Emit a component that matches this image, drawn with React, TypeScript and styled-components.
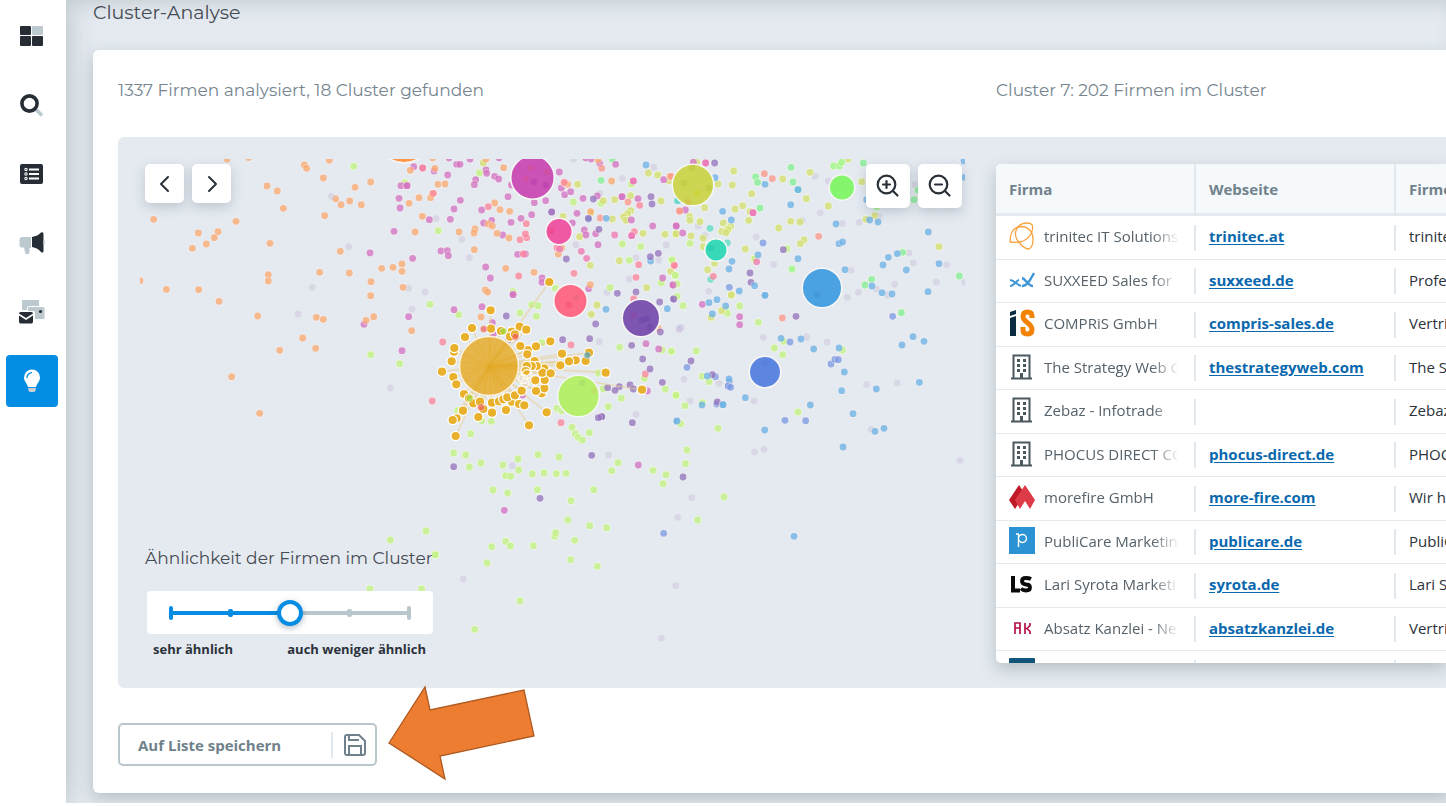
import React, { useState } from "react";
import styled, { createGlobalStyle, css } from "styled-components";

const GlobalStyle = createGlobalStyle`
  *, *::before, *::after { box-sizing: border-box; }
  body {
    margin: 0;
    background: #ffffff;
    color: #2b323a;
    font-family: "Open Sans", "Noto Sans", sans-serif;
    font-size: 15px;
    line-height: 20px;
  }
  button, input { font: inherit; }
`;

const headingFont = css`
  font-family: Montserrat, Inter, "Open Sans", sans-serif;
  font-weight: 400;
`;

const Page = styled.div`
  display: flex;
  overflow: hidden;
`;

const Sidebar = styled.nav`
  position: relative;
  z-index: 1;
  flex: none;
  display: flex;
  flex-direction: column;
  gap: 17px;
  width: 66px;
  padding: 10px 8px 10px 6px;
  background: #ffffff;
  box-shadow: 0 0 30px rgba(140, 158, 155, 0.5);
`;

const NavLink = styled.a<{ $active?: boolean }>`
  display: flex;
  align-items: center;
  justify-content: center;
  width: 52px;
  height: 52px;
  border-radius: 4px;
  background: ${(p) => (p.$active ? "#048de2" : "transparent")};
`;

const Main = styled.main`
  flex: 1;
  min-width: 0;
  padding: 0 0 10px 27px;
  background: #e5eaf1;
  box-shadow: inset 0 12px 20px -10px rgba(140, 158, 155, 0.4);
`;

const Title = styled.h1`
  ${headingFont}
  margin: 0;
  height: 50px;
  font-size: 19px;
  line-height: 25px;
  color: #454b52;
`;

const Card = styled.section`
  padding: 27px 0 27px 25px;
  background: #ffffff;
  border-radius: 6px 0 0 6px;
  box-shadow: 0 6px 16px rgba(95, 115, 115, 0.35);
`;

const Heads = styled.div`
  display: grid;
  grid-template-columns: 1fr 450px;
  height: 60px;
`;

const Subtitle = styled.h2`
  ${headingFont}
  margin: 0;
  font-size: 17px;
  line-height: 26px;
  color: #76858f;
`;

const Panel = styled.div`
  display: grid;
  grid-template-columns: 1fr 450px;
  gap: 31px;
  padding: 22px 0 25px 22px;
  background: #e5eaf1;
  border-radius: 6px 0 0 6px;
`;

const MapArea = styled.div`
  position: relative;
  height: 504px;
`;

const Graph = styled.svg`
  display: block;
  width: 100%;
  height: 500px;
`;

const Overlay = styled.div<{ $side: "left" | "right" }>`
  position: absolute;
  top: 5px;
  ${(p) => (p.$side === "left" ? "left: 5px;" : "right: 3px;")}
  display: flex;
  gap: 8px;
`;

const IconButton = styled.button<{ $size: number }>`
  display: flex;
  align-items: center;
  justify-content: center;
  width: ${(p) => p.$size}px;
  height: ${(p) => p.$size}px;
  padding: 0;
  border: 0;
  border-radius: 5px;
  background: #ffffff;
  color: #2a3138;
  box-shadow: 0 4px 12px rgba(70, 90, 100, 0.25);
`;

const Similarity = styled.div`
  position: absolute;
  left: 5px;
  bottom: 5px;
  width: 292px;
`;

const SimilarityLabel = styled.label`
  ${headingFont}
  display: block;
  font-size: 17px;
  line-height: 24px;
  margin-bottom: 21px;
  color: #454b52;
  white-space: nowrap;
`;

const SliderBox = styled.div`
  display: grid;
  align-items: center;
  justify-content: center;
  grid-template-columns: 242px;
  height: 43px;
  margin: 0 4px 0 2px;
  border-radius: 4px;
  background: #ffffff;
`;

const Ticks = styled.div`
  grid-area: 1 / 1;
  display: flex;
  align-items: center;
  justify-content: space-between;
  background: linear-gradient(90deg, #048de2 50%, #b9c6cc 50%) center / 100% 4px no-repeat;
`;

const Tick = styled.span<{ $end?: boolean; $on?: boolean }>`
  width: ${(p) => (p.$end ? 4 : 5)}px;
  height: ${(p) => (p.$end ? 14 : 8)}px;
  border-radius: 2px;
  background: ${(p) => (p.$on ? "#048de2" : "#b9c6cc")};
`;

const Range = styled.input`
  grid-area: 1 / 1;
  width: 100%;
  height: 26px;
  margin: 0;
  appearance: none;
  background: transparent;
  &::-webkit-slider-thumb {
    appearance: none;
    width: 26px;
    height: 26px;
    border: 4px solid #048de2;
    border-radius: 50%;
    background: #ffffff;
    box-shadow: 0 2px 6px rgba(40, 60, 80, 0.35);
  }
`;

const RangeEnds = styled.div`
  display: flex;
  justify-content: space-between;
  padding: 6px 11px 0 8px;
  font-size: 13px;
  font-weight: 700;
  line-height: 18px;
`;

const TableBox = styled.div`
  height: 499px;
  margin-top: 5px;
  overflow: hidden;
  border-radius: 5px 0 0 5px;
  background: #ffffff;
  box-shadow: 0 6px 16px rgba(95, 115, 115, 0.35);
`;

const Table = styled.table`
  width: 600px;
  table-layout: fixed;
  border-collapse: separate;
  border-spacing: 0;
`;

const HeadCell = styled.th`
  height: 52px;
  padding: 0 13px;
  border-bottom: 3px solid #e4eaef;
  background: linear-gradient(#e2e9ee, #e2e9ee) right / 2px 100% no-repeat #f5f9fc;
  color: #71828c;
  font-weight: 700;
  text-align: left;
`;

const Row = styled.tr`
  height: 43px;
  &:nth-child(odd) {
    height: 44px;
  }
`;

const Cell = styled.td`
  padding: 0 13px 3px;
  border-bottom: 1px solid #e4eaef;
  background: linear-gradient(#e2e9ee, #e2e9ee) right / 2px 26px no-repeat;
  white-space: nowrap;
`;

const Company = styled.div`
  display: flex;
  align-items: center;
  gap: 9px;
  svg { flex: none; }
`;

const CompanyName = styled.span`
  width: 133px;
  overflow: hidden;
  color: #56626b;
  mask-image: linear-gradient(90deg, #000 108px, transparent 136px);
`;

const SiteLink = styled.a`
  color: #0a68ae;
  font-weight: 700;
  text-decoration: underline;
  text-underline-offset: 2px;
`;

const Footer = styled.footer`
  position: relative;
  margin-top: 35px;
`;

const SaveButton = styled.button`
  display: flex;
  align-items: center;
  justify-content: space-between;
  width: 259px;
  height: 43px;
  padding: 0 8px 0 18px;
  border: 2px solid #b9c6cc;
  border-radius: 5px;
  background: #ffffff;
  color: #6f818b;
  font-weight: 700;
`;

const SaveIcon = styled.span`
  display: flex;
  align-items: center;
  height: 26px;
  padding-left: 10px;
  border-left: 2px solid #e2e9ee;
`;

const Arrow = styled.svg`
  position: absolute;
  left: 269px;
  top: -39px;
  pointer-events: none;
`;

const palette = {
  orange: "#fb9a53",
  magenta: "#cb54b6",
  purple: "#7d55b2",
  lilac: "#c9c0da",
  green: "#b5ef6c",
  olive: "#cdd553",
  pink: "#fd6b87",
  hot: "#ef5aa6",
  salmon: "#fd8370",
  blue: "#4aa3e3",
  indigo: "#5d86e1",
  teal: "#38d9b9",
  mint: "#66ea85",
  lime: "#86f56e",
};
type Colour = keyof typeof palette;

/* Nodes are kept per sector: x, y of the sector on the map, and node positions on a grid of thirds. */
interface Sector {
  x: number;
  y: number;
  nodes: Partial<Record<Colour, string>>;
}

const sectors: Sector[] = [
  {
    x: 118, y: 137,
    nodes: {
      magenta: "756,348 738,562",
      orange: "327,66 392,62 447,147 478,162 496,214 107,247 354,253 241,288 300,284 289,302 265,321 223,334 456,319 451,413 451,432 66,431 145,457 242,458 303,493 419,537 485,640 341,719 554,603 593,634 595,541 616,547 605,406 694,408 667,343 620,236 669,203 695,192 653,185 730,203 711,151 758,135 616,123 634,70 559,84 566,94 759,434 758,476 791,394 744,550 767,539",
      green: "707,88 758,653",
      lilac: "640,178 692,329 583,451 540,531 817,753",
    },
  },
  {
    x: 390, y: 150,
    nodes: {
      lilac: "138,206 216,268 238,323 56,415 105,426 551,27 697,85 792,52 629,130 829,285 738,323 718,387 651,427 558,284 806,330",
      green: "268,69 45,98 145,242 724,102 550,156 633,160 697,282 752,290 718,331 846,331 855,376 814,398 660,413 496,415 369,425",
      mint: "633,91 667,27",
      olive: "280,39 775,69 803,75 563,103 674,149 722,137 640,152 813,153 722,182 713,191 701,200 708,211 667,207 759,250 825,253 858,251 569,260 601,346 688,332 770,413 519,199 602,188 842,364 838,92",
      magenta: "71,50 98,54 132,63 173,75 200,43 210,43 240,27 288,60 290,70 257,89 253,104 314,79 326,87 33,107 51,107 51,107 27,145 30,174 118,209 181,208 192,177 211,151 12,244 275,180 281,219 305,211 354,140 363,217 393,205 425,194 433,158 467,152 508,66 514,114 524,134 542,125 579,145 561,190 547,219 583,240 588,255 617,251 624,284 622,138 696,140 696,140 744,146 724,210 788,228 725,257 629,40 677,43 730,93 821,89 818,384 849,405 153,303 172,302 175,317 68,325 287,351 301,384 383,313 406,312 338,255 456,384 456,397 369,433 485,186 603,27 587,24 327,24 177,24 364,105 596,416 858,228",
      orange: "61,61 135,55 144,103 165,102 128,130 122,143 87,143 57,160 97,199 75,246 207,246 255,237 252,249 314,159 330,179 359,184 295,222 307,228 321,250 357,264 253,299 347,355 432,367 9,352 36,342 36,364 39,412 286,420 293,426 341,53 288,27 522,98 533,103 665,93 624,29 601,404 505,312 840,79 128,24 515,294 602,185",
      pink: "98,54 390,269 410,263 406,252 409,221 295,170 386,378 552,370 746,344 738,382 853,346 733,245 749,166 130,130 400,312 501,293 523,97",
      hot: "574,304 590,325 674,255 509,297 725,257 730,93",
      salmon: "635,55 714,156 631,204 868,183",
      blue: "768,45 649,205 782,333 596,207 866,152",
      purple: "610,147 627,238 529,327 783,140 786,162 781,320 805,310 682,430 738,426 595,205 485,186",
    },
  },
  {
    x: 670, y: 150,
    nodes: {
      lilac: "435,79 475,93 451,189 397,211 259,261 311,343 543,361 517,221 568,217 627,199 717,309 730,339 830,344 799,396 674,403 619,417 565,427 532,442 116,424 85,228 104,257 735,104 655,165 652,435 884,397",
      olive: "191,63 144,102 187,105 245,131 338,87 420,67 409,146 475,168 534,27 575,95 104,173 195,177 218,167 59,199 60,211 90,215 236,211 240,185 160,219 182,229 155,244 174,238 174,238 168,248 63,258 18,252 99,265 100,290 226,297 326,234 362,214 390,216 402,270 391,281 588,208 614,197 807,290 184,435 113,359 134,340 254,327 80,37",
      green: "60,280 6,330 16,376 21,402 351,296 254,327",
      mint: "363,52 257,81 263,97 369,96 270,174 580,39 744,120 732,149 698,307 605,388 585,405 868,378",
      lime: "491,48 508,48 515,37 620,170 366,357",
      teal: "384,119 120,235 172,279 122,388 22,152",
      magenta: "107,39 46,180 19,228 38,249 249,188 9,405 70,37",
      hot: "260,335 249,188 107,39",
      pink: "13,346 130,379",
      salmon: "283,71 307,86 446,259 29,183 3,79",
      indigo: "279,279 178,412",
      purple: "340,299 240,369 243,397 134,39",
      blue: "285,103 362,164 158,184 184,210 498,222 599,210 624,216 775,246 384,326 384,119 525,359 507,281 518,276 264,315 186,334 177,357 254,407 208,423 285,436 639,345 655,322 682,311 709,360 807,341 606,408 636,428 666,432 774,425 882,33 884,82 590,149 135,83",
    },
  },
  {
    x: 390, y: 290,
    nodes: {
      lilac: "66,57 628,155 738,373 868,115",
      green: "120,43 206,74 390,69 425,44 444,47 439,79 456,158 29,221 275,392 304,394 242,431 501,355 515,362 546,412 556,431 565,442 577,450 598,428 655,350 694,325 640,296 625,249 689,172 763,265 826,297 845,184 858,315 816,180 203,362",
      olive: "621,45 604,73",
      magenta: "192,59 276,50 56,80 36,182 369,14 307,98 310,132 768,161 806,177 772,303 398,315",
      pink: "158,156 127,333 543,165 513,398 766,252 731,27",
      orange: "65,122 273,81 805,115 -391,370",
      purple: "349,78 518,149 617,102 599,146 809,36 811,126 725,166 758,207 780,237 817,277 720,285 730,297 688,290 653,293 675,301 635,380 635,380 625,383 727,398 851,27 355,150",
      blue: "648,58 832,56 860,394",
    },
  },
  {
    x: 670, y: 290,
    nodes: {
      lilac: "34,112 28,119 42,268 147,280 60,333 252,333 280,142 410,141 471,156 590,283 681,279 604,418 282,478 254,486 870,511",
      green: "21,19 39,47 209,48 167,58 172,70 265,97 341,154 313,174 338,194 517,180 79,183 4,184 97,259 117,275 18,316 45,347 97,338 32,401 144,415 384,366",
      olive: "184,15 155,62 123,82",
      mint: "694,68",
      salmon: "337,84",
      magenta: "97,43 209,80 209,104",
      indigo: "360,156 345,391 407,392 483,222 495,208 505,209 51,232 136,260 178,275 175,288 175,288 182,292 668,79 140,342",
      purple: "11,27 378,79 63,213 127,254 142,336",
      blue: "141,29 117,38 285,16 127,72 333,145 393,147 431,177 507,174 523,246 515,302 619,297 549,371 748,277 696,165 729,140 762,154 421,345 226,323 284,420 519,471 615,424 642,415 21,393 112,258 177,267 159,344 159,344 96,345 167,48",
    },
  },
  {
    x: 380, y: 440,
    nodes: {
      lilac: "397,77 686,45 935,173 893,232 250,417 887,437 844,595",
      green: "221,39 257,45 268,81 303,69 369,75 414,57 416,90 377,107 392,109 457,102 492,99 474,44 537,51 529,101 558,100 339,150 383,159 472,149 573,182 641,149 695,92 714,68 819,91 858,104 849,131 921,30 917,71 1032,171 953,240 563,240 629,257 680,263 524,289 527,278 584,301 460,317 377,304 391,318 335,320 321,369 572,359 652,379 420,483 284,568 138,273 31,300 166,344 166,344 125,447 -30,447",
      purple: "221,80 480,175 635,46 909,111",
      magenta: "373,211 775,75",
      indigo: "851,280",
      blue: "1242,289",
    },
  },
];

const clusterNodes =
  "302,61 246,114 225,141 192,185 193,174 185,214 156,245 190,261 199,283 222,312 237,325 250,340 280,357 270,335 306,338 306,368 327,334 340,328 365,335 352,322 348,360 387,342 375,316 403,346 395,302 200,385 219,362 188,390 197,438 265,381 417,406 470,367 455,310 463,295 438,303 436,271 464,270 463,235 457,248 482,250 434,213 440,228 425,228 410,228 407,243 414,180 412,193 391,168 438,169 481,154 389,110 409,119 365,125 360,140 375,133 333,123 303,116 516,191 511,226 557,211 537,214 587,213 597,188 647,248 756,299 478,-24";

/* Nodes of other clusters that lie over the highlighted one. */
const overNodes: { colour: string; points: string }[] = [
  { colour: "#9bdc3c", points: "340,124 239,325" },
  { colour: "#ee5a55", points: "281,117 376,140 273,352" },
  { colour: "#4aa3b3", points: "592,196" },
];

const hubs: { x: number; y: number; r: number; fill: string }[] = [
  { x: 404, y: 136, r: 26, fill: "#fd9647" },
  { x: 532.5, y: 177.5, r: 21, fill: "#cb52b6" },
  { x: 559, y: 231.5, r: 12.5, fill: "#ef58a5" },
  { x: 693, y: 185, r: 20, fill: "#ccd652" },
  { x: 842, y: 187.5, r: 12, fill: "#86f56e" },
  { x: 716, y: 250, r: 10.5, fill: "#38d9b9" },
  { x: 822, y: 288, r: 19, fill: "#4aa2e3" },
  { x: 570.5, y: 301, r: 16, fill: "#fd6b87" },
  { x: 641, y: 318, r: 18, fill: "#7e56b2" },
  { x: 765, y: 372, r: 15, fill: "#5d86e1" },
  { x: 578.5, y: 396, r: 20, fill: "#b5ef6c" },
];

/* Nodes that shimmer through the hubs. */
const hubShades: { x: number; y: number; fill: string }[] = [
  { x: 526, y: 179, fill: "#d64d98" },
  { x: 534, y: 182, fill: "#b93aa8" },
  { x: 531, y: 168, fill: "#d64d98" },
  { x: 547, y: 172, fill: "#d64d98" },
  { x: 546, y: 185, fill: "#b93aa8" },
  { x: 551, y: 231, fill: "#f0407f" },
  { x: 692, y: 168, fill: "#bcc63e" },
  { x: 684, y: 183, fill: "#bcc63e" },
  { x: 697, y: 193, fill: "#cbd12a" },
  { x: 709, y: 188, fill: "#bcc63e" },
  { x: 688, y: 202, fill: "#d7b548" },
  { x: 711, y: 248, fill: "#22c6ae" },
  { x: 817, y: 295, fill: "#3d8fd6" },
  { x: 569, y: 305, fill: "#f6506e" },
  { x: 576, y: 298, fill: "#e5667d" },
  { x: 634, y: 315, fill: "#8a44a0" },
  { x: 642, y: 320, fill: "#6a41a6" },
  { x: 647, y: 319, fill: "#6a41a6" },
  { x: 650, y: 327, fill: "#6a41a6" },
  { x: 582, y: 383, fill: "#a3d968" },
  { x: 594, y: 391, fill: "#c3dc60" },
  { x: 766, y: 363, fill: "#567ddb" },
];

const parse = (points: string, x: number, y: number) =>
  points.split(" ").map((pair) => {
    const [px, py] = pair.split(",").map(Number);
    return { cx: x + px / 3, cy: y + py / 3 };
  });

const cluster = parse(clusterNodes, 390, 290);

function ClusterMap() {
  return (
    <Graph viewBox="140 159 825 500" preserveAspectRatio="xMinYMin slice" aria-label="Cluster">
      {sectors.map((sector) =>
        Object.entries(sector.nodes).map(([colour, points]) => {
          const bright = colour === "green" || colour === "lime" || colour === "mint" || colour === "olive";
          return (
            <g key={`${sector.x}-${sector.y}-${colour}`} fill={palette[colour as Colour]}>
              {parse(points as string, sector.x, sector.y).map((p, i) => (
                <React.Fragment key={i}>
                  {colour !== "lilac" && (
                    <circle {...p} r={4.4} fill={bright ? "#f2fbdc" : "#fbf0f0"} fillOpacity={bright ? 0.6 : 0.4} />
                  )}
                  <circle {...p} r={3.4} fillOpacity={colour === "lilac" ? 0.45 : 0.62} />
                </React.Fragment>
              ))}
            </g>
          );
        })
      )}
      <g stroke="#e6cf98" strokeOpacity={0.6} strokeWidth={1.6}>
        {cluster.map((p, i) => (
          <line key={i} x1={489} y1={366} x2={p.cx} y2={p.cy} />
        ))}
      </g>
      {hubs.map((h) => (
        <circle key={`${h.x}-${h.y}`} cx={h.x} cy={h.y} r={h.r + 0.8} fill={h.fill} stroke="#f6f6f4" strokeWidth={1.6} />
      ))}
      {hubShades.map((s) => (
        <circle key={`${s.x}-${s.y}`} cx={s.x} cy={s.y} r={3.3} fill={s.fill} fillOpacity={0.5} />
      ))}
      {cluster.map((p, i) => (
        <circle key={i} {...p} r={4.7} fill="#e9b02c" stroke="#ffffff" strokeWidth={1.2} />
      ))}
      <g fill="none" stroke="#fff8ea" strokeWidth={1.4}>
        <circle cx={523} cy={379} r={4.5} />
        <circle cx={527} cy={374} r={4.5} />
        <circle cx={525} cy={383} r={4} />
      </g>
      <circle cx={489} cy={366} r={29.5} fill="#e7b64a" stroke="#fbf3e0" strokeWidth={1.4} />
      <g stroke="#e5ac2b" strokeOpacity={0.3} strokeWidth={1.6}>
        {cluster.map((p, i) => {
          const dx = p.cx - 489;
          const dy = p.cy - 366;
          const k = 28 / Math.hypot(dx, dy);
          return <line key={i} x1={489} y1={366} x2={489 + dx * k} y2={366 + dy * k} />;
        })}
      </g>
      {overNodes.map((group) => (
        <g key={group.colour} fill={group.colour} fillOpacity={0.7} stroke="#fff3e0" strokeOpacity={0.5}>
          {parse(group.points, 390, 290).map((p, i) => (
            <circle key={i} {...p} r={3.5} />
          ))}
        </g>
      ))}
    </Graph>
  );
}

const dark = "#262d34";
const pale = "#bccad0";

const navItems = [
  {
    label: "Dashboard",
    icon: (
      <svg width="24" height="22" viewBox="0 0 24 22">
        <rect x="0" y="1" width="11" height="9" rx="1" fill={dark} />
        <rect x="12" y="1" width="11" height="9" rx="1" fill={pale} />
        <rect x="0" y="11" width="11" height="10" rx="1" fill={dark} />
        <rect x="12" y="11" width="11" height="10" rx="1" fill={dark} />
      </svg>
    ),
  },
  {
    label: "Suche",
    icon: (
      <svg width="24" height="24" viewBox="0 0 24 24">
        <path d="M16.500 17l5.500 5.500" stroke={pale} strokeWidth="3.600" />
        <circle cx="9.500" cy="10.500" r="7.600" fill="none" stroke={dark} strokeWidth="3.600" />
      </svg>
    ),
  },
  {
    label: "Listen",
    icon: (
      <svg width="24" height="20" viewBox="0 0 24 20">
        <rect x="0" y="0" width="23" height="20" rx="2" fill={dark} />
        <path d="M9 5.500h10M9 10h10M9 14.500h10" stroke="#fff" strokeWidth="2" />
        <g fill="none" stroke="#fff" strokeWidth="1.100">
          <circle cx="6" cy="5.500" r="1.200" />
          <circle cx="6" cy="10" r="1.200" />
          <circle cx="6" cy="14.500" r="1.200" />
        </g>
      </svg>
    ),
  },
  {
    label: "Kampagnen",
    icon: (
      <svg width="26" height="22" viewBox="0 0 26 22">
        <path d="M12 5v11H10.500v4.500q0 1.500-1.500 1.500H7.500q-1.500 0-1.500-1.500L5 15.500H3q-2.500 0-2.500-2.500V8Q.5 5 3.500 5z" fill={pale} />
        <path d="M13 5q6-1 9-4.500 2.500-1 2.500 1.500V19q0 2.500-2.500 1-3-4-9-5z" fill={dark} />
        <path d="M25 8.500v4" stroke={pale} strokeWidth="1.500" />
      </svg>
    ),
  },
  {
    label: "Nachrichten",
    icon: (
      <svg width="26" height="24" viewBox="0 0 26 24">
        <path d="M4 0h15q1 0 1 1v5H10q-2 0-2 2v2H3V1q0-1 1-1z" fill={pale} />
        <path d="M10 7h14q1.500 0 1.500 1.500V18q0 1-1.500 1h-8v-6q0-2-2-2H9V8q0-1 1-1z" fill={pale} />
        <circle cx="21.500" cy="11.500" r="1.600" fill={dark} />
        <path d="M0 13.500q0-1.500 1.500-1.500h11q1.500 0 1.500 1.500L7 18z" fill={dark} />
        <path d="M0 15.500l7 4.500 7-4.500v6q0 2-1.500 2h-11Q0 23.500 0 21.500z" fill={dark} />
      </svg>
    ),
  },
  {
    label: "Insights",
    icon: (
      <svg width="18" height="24" viewBox="0 0 18 24">
        <path d="M9 .500a8 8 0 0 1 8 8c0 4-3 5.500-4 9.500H5C4 14 1 12.500 1 8.500a8 8 0 0 1 8-8z" fill="#fff" />
        <path d="M4 8.500q.5-4 4.500-4.800" fill="none" stroke="#048de2" strokeWidth="1.300" strokeLinecap="round" />
        <path d="M5 19h8l-.5 2.500q-.5 1.500-2 1.500h-3q-1.500 0-2-1.500z" fill="#c9cfd2" />
      </svg>
    ),
  },
];

const Building = () => (
  <svg width="26" height="26" viewBox="0 0 26 26" fill="none" stroke="#4b5860">
    <path d="M4.500 24V1.500h16V24M2 24.500h21" strokeWidth="2" />
    <path d="M9.500 5v15M15.500 5v15" strokeWidth="3" strokeDasharray="3 2" />
    <path d="M12.500 19v5" strokeWidth="3" />
  </svg>
);

const logos: Record<string, React.ReactNode> = {
  trinitec: (
    <svg width="26" height="28" viewBox="0 0 26 28" fill="none" stroke="#f9a13c" strokeWidth="1.300">
      <path d="M1 20C1 10 5 5 12 4.500c7 0 12 5 12 13 0 4-1 8-4 9.500-5 0-13-8-13.500-14" />
      <path d="M6.500 13C6 6 11 1 18 1c5 0 6 2 5.500 6C23 13 18 18 13 19.500c-4 1-8 1-12 .5" />
    </svg>
  ),
  suxxeed: (
    <svg width="26" height="26" viewBox="0 0 26 26" fill="none" stroke="#3f97d6">
      <path d="M1 13c4 0 6 4 11 6M10 13C8 13 5 19 1 19" strokeWidth="2" />
      <path d="M13 11c4 1 6 8 11 8M25 6c-3 5-6 13-12 13" strokeWidth="2.400" />
    </svg>
  ),
  compris: (
    <svg width="26" height="28" viewBox="0 0 26 28">
      <path d="M1 3l6-2v4L1 7zM1 9l6-2v20H1z" fill="#0b2d42" />
      <path d="M23 9V7q0-4-4.500-4T14 7.500C14 13 23 14 23 20.500q0 4.500-4.500 4.500T14 21v-3" fill="none" stroke="#f28306" strokeWidth="5" />
    </svg>
  ),
  building: <Building />,
  morefire: (
    <svg width="26" height="26" viewBox="0 0 26 26">
      <path d="M10 1l6 9-10 15L0 16z" fill="#c01a28" />
      <path d="M16 1l10 15-5 9-5-8-5 8-5-9z" fill="#de3b48" />
    </svg>
  ),
  publicare: (
    <svg width="26" height="27" viewBox="0 0 26 27">
      <rect width="26" height="27" fill="#2b93d3" />
      <path d="M9.500 20V7M9.500 11a4 4 0 1 1 4 4.500 4 4 0 0 1-4-4.500M7 7h3" fill="none" stroke="#fff" strokeWidth="1.400" />
    </svg>
  ),
  syrota: (
    <svg width="26" height="26" viewBox="0 0 26 26">
      <path d="M4 5v14.500h7" fill="none" stroke="#0a0a0a" strokeWidth="4" />
      <path d="M22 8q-2-1-5-1-4 0-4 3t4 3.500q4 0 4 3t-4 3q-3 0-5-2" fill="none" stroke="#0a0a0a" strokeWidth="3.800" />
    </svg>
  ),
  absatz: (
    <svg width="26" height="26" viewBox="0 0 26 26" fill="none" stroke="#b3124a" strokeWidth="1.700">
      <path d="M6 19V8h5v11M6 13h5M16 8v11M16 13.500h2l3-3V8M18 13.500l3 3V19" />
    </svg>
  ),
  teal: (
    <svg width="26" height="26" viewBox="0 0 26 26">
      <rect width="26" height="26" rx="1" fill="#11567a" />
    </svg>
  ),
};

const rows = [
  { logo: "trinitec", name: "trinitec IT Solutions", site: "trinitec.at", text: "trinitec IT" },
  { logo: "suxxeed", name: "SUXXEED Sales for", site: "suxxeed.de", text: "Professionell" },
  { logo: "compris", name: "COMPRiS GmbH", site: "compris-sales.de", text: "Vertrieb" },
  { logo: "building", name: "The Strategy Web GmbH", site: "thestrategyweb.com", text: "The Strategy" },
  { logo: "building", name: "Zebaz - Infotrade", site: "", text: "Zebaz" },
  { logo: "building", name: "PHOCUS DIRECT COM", site: "phocus-direct.de", text: "PHOCUS" },
  { logo: "morefire", name: "morefire GmbH", site: "more-fire.com", text: "Wir helfen" },
  { logo: "publicare", name: "PubliCare Marketing", site: "publicare.de", text: "PubliCare" },
  { logo: "syrota", name: "Lari Syrota Marketing", site: "syrota.de", text: "Lari Syrota" },
  { logo: "absatz", name: "Absatz Kanzlei - Neu", site: "absatzkanzlei.de", text: "Vertrieb" },
  { logo: "teal", name: "", site: "", text: "" },
];

const Chevron = ({ d }: { d: string }) => (
  <svg width="24" height="24" viewBox="0 0 24 24" fill="none" stroke="currentColor" strokeWidth="2">
    <path d={d} strokeLinecap="round" strokeLinejoin="round" />
  </svg>
);

const Magnifier = ({ plus }: { plus?: boolean }) => (
  <svg width="24" height="24" viewBox="0 0 24 24" fill="none" stroke="currentColor" strokeWidth="2.200">
    <circle cx="10.500" cy="10.500" r="8.800" />
    <path d={plus ? "M17 17l4.500 4.500M7 10.500h7M10.500 7v7" : "M17 17l4.500 4.500M7 10.500h7"} strokeLinecap="round" />
  </svg>
);

export default function App() {
  const [similarity, setSimilarity] = useState(2);
  return (
    <>
      <GlobalStyle />
      <Page>
        <Sidebar>
          {navItems.map((item, i) => (
            <NavLink key={item.label} href="#" aria-label={item.label} $active={i === 5}>
              {item.icon}
            </NavLink>
          ))}
        </Sidebar>
        <Main>
          <Title>Cluster-Analyse</Title>
          <Card>
            <Heads>
              <Subtitle>1337 Firmen analysiert, 18 Cluster gefunden</Subtitle>
              <Subtitle>Cluster 7: 202 Firmen im Cluster</Subtitle>
            </Heads>
            <Panel>
              <MapArea>
                <ClusterMap />
                <Overlay $side="left">
                  <IconButton $size={39} aria-label="Zurück">
                    <Chevron d="M15 5l-7 7 7 7" />
                  </IconButton>
                  <IconButton $size={39} aria-label="Weiter">
                    <Chevron d="M9 5l7 7-7 7" />
                  </IconButton>
                </Overlay>
                <Overlay $side="right">
                  <IconButton $size={44} aria-label="Vergrößern">
                    <Magnifier plus />
                  </IconButton>
                  <IconButton $size={44} aria-label="Verkleinern">
                    <Magnifier />
                  </IconButton>
                </Overlay>
                <Similarity>
                  <SimilarityLabel htmlFor="similarity">Ähnlichkeit der Firmen im Cluster</SimilarityLabel>
                  <SliderBox>
                    <Ticks>
                      <Tick $end $on />
                      <Tick $on />
                      <Tick $on />
                      <Tick />
                      <Tick $end />
                    </Ticks>
                    <Range
                      id="similarity"
                      type="range"
                      min={0}
                      max={4}
                      value={similarity}
                      onChange={(e) => setSimilarity(Number(e.target.value))}
                    />
                  </SliderBox>
                  <RangeEnds>
                    <span>sehr ähnlich</span>
                    <span>auch weniger ähnlich</span>
                  </RangeEnds>
                </Similarity>
              </MapArea>
              <TableBox>
                <Table>
                  <thead>
                    <tr>
                      <HeadCell>Firma</HeadCell>
                      <HeadCell>Webseite</HeadCell>
                      <HeadCell>Firmenprofil</HeadCell>
                    </tr>
                  </thead>
                  <tbody>
                    {rows.map((row, i) => (
                      <Row key={i}>
                        <Cell>
                          <Company>
                            {logos[row.logo]}
                            <CompanyName>{row.name}</CompanyName>
                          </Company>
                        </Cell>
                        <Cell>{row.site && <SiteLink href="#">{row.site}</SiteLink>}</Cell>
                        <Cell>{row.text}</Cell>
                      </Row>
                    ))}
                  </tbody>
                </Table>
              </TableBox>
            </Panel>
            <Footer>
              <SaveButton>
                Auf Liste speichern
                <SaveIcon>
                  <svg width="24" height="24" viewBox="0 0 24 24" fill="none" stroke="currentColor" strokeWidth="2">
                    <path d="M4 2h12l6 6v12q0 2-2 2H4q-2 0-2-2V4q0-2 2-2z" />
                    <path d="M6 2v5h10M6 22v-9h12v9" />
                  </svg>
                </SaveIcon>
              </SaveButton>
              <Arrow width="150" height="98" viewBox="387 684 150 98" aria-hidden="true">
                <path
                  d="M389 743L425 687 430 710 524 690 534 736 440 756 445 779z"
                  fill="#ed7d31"
                  stroke="#ae5a21"
                  strokeWidth="1.300"
                />
              </Arrow>
            </Footer>
          </Card>
        </Main>
      </Page>
    </>
  );
}
